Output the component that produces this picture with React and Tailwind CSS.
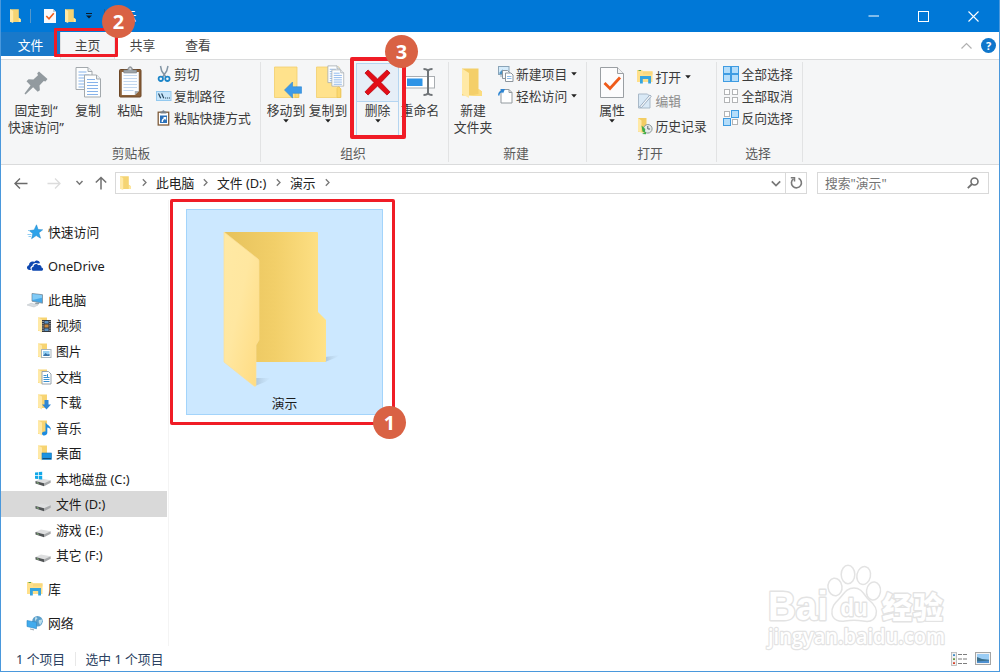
import React from "react";

const Svg = ({ w = 16, h = 16, vb, className = "", children }) => (
  <svg width={w} height={h} viewBox={vb || `0 0 ${w} ${h}`} className={`block shrink-0 overflow-visible ${className}`} fill="none">
    {children}
  </svg>
);

/* ---------- small shared drawings ---------- */

const MiniFolder = ({ w = 11, h = 14 }) => (
  <Svg w={w} h={h} vb="0 0 11 14">
    <path d="M0 .3h8.800v8.400l1.900 1.300v3H0z" fill="#f5d473" />
    <path d="M8.800 9l1.900 1.200V13H8.800z" fill="#ffe9a0" />
    <path d="M0 .3l3.200 1.700V14L0 12.700z" fill="#ffe9a6" />
  </Svg>
);

const SheetLines = ({ x, y, s = 1 }) => (
  <g transform={`translate(${x} ${y}) scale(${s})`}>
    <path d="M.5.5h12l4 4v18H.5z" fill="#fdfefe" stroke="#a3a9ad" />
    <path d="M12.5.5v4h4" fill="#e9eef2" stroke="#a3a9ad" />
    <path d="M3 5h8M3 8h11M3 11h11M3 14h11M3 17h11M3 20h11" stroke="#86b2ea" strokeWidth="1.2" />
  </g>
);

const PinIcon = () => (
  <Svg w={24} h={24}>
    <path d="M15 .500L23.500 8l-2 2.500-1.800-.5-4.200 4.600.4 4.700-2.200 1.500-4.600-4.600L1.500 23.500l-1-1 6-8.100-4-4.200L4.600 8.200l4.800.4 4.600-4.400-.8-1.900z" fill="#929a9f" />
  </Svg>
);

const CopyIcon = () => (
  <Svg w={26} h={32}>
    <SheetLines x={0.5} y={1} />
    <SheetLines x={9} y={8.5} />
  </Svg>
);

const PasteIcon = () => (
  <Svg w={24} h={32}>
    <rect x="1.500" y="3.500" width="21.500" height="27.500" rx="1" fill="#8b6039" stroke="#6c4726" />
    <path d="M3.800 6h17v19l-4 4h-13z" fill="#fcfdff" />
    <path d="M5.500 9.500h13.500M5.500 12.500h13.500M5.500 15.500h13.500M5.500 18.500h13.500M5.500 21.500h13.500M5.500 24.500h10" stroke="#c3d7ef" />
    <path d="M20.800 25h-4v4z" fill="#a9b2ba" />
    <path d="M5.800 7V4h4c0-4.400 4.800-4.400 4.800 0h4v3z" fill="#9da3a8" stroke="#7d8388" strokeWidth=".6" />
    <circle cx="12.200" cy="2.800" r=".9" fill="#e6e8ea" />
  </Svg>
);

const CutIcon = () => (
  <Svg>
    <path d="M4.500 0l1.200 5 4.400 6.500M12 0l-1.300 5-4.400 6.500" stroke="#8295a4" strokeWidth="1.500" />
    <circle cx="4.800" cy="12.800" r="2.200" stroke="#1c86c9" strokeWidth="1.800" />
    <circle cx="11.400" cy="12.800" r="2.200" stroke="#1c86c9" strokeWidth="1.800" />
  </Svg>
);

const PathIcon = () => (
  <Svg>
    <rect x=".5" y="3.500" width="14.500" height="9" fill="#c8e6fb" stroke="#93c9ef" />
    <path d="M2.500 5.500l2.200 4.800M5.600 5.500l2.200 4.800" stroke="#26465f" strokeWidth="1.200" />
    <path d="M9 10h1.200M11 10h1.200M13 10h1" stroke="#26465f" strokeWidth="1.200" />
  </Svg>
);

const PasteShortcutIcon = () => (
  <Svg>
    <rect x="2.200" y="2.200" width="10.500" height="12.800" fill="#fff" stroke="#7e5b39" strokeWidth="1.300" />
    <path d="M4.500 3.600V1.500h1.500Q7.400-.8 8.800 1.500h1.600v2.100z" fill="#7a828a" />
    <rect x="4" y="5.500" width="7" height="7.500" fill="#2c71b9" />
    <path d="M5.600 12c0-2.500 1-3.600 2.500-3.900L7 7h3.200v3.200L9 9.100C7.600 9.500 7 10.400 7 12z" fill="#fff" />
  </Svg>
);

const BigFolderBase = () => (
  <>
    <path d="M.5.500h22.500v20l2 2v8.500H.5z" fill="#ffe28c" stroke="#f2cf6c" strokeWidth=".8" />
    <path d="M21 22l1.500-2 2 2v9H21z" fill="#fbd871" stroke="#eac45a" strokeWidth=".7" />
  </>
);

const MoveToIcon = () => (
  <Svg w={28} h={32}>
    <g transform="translate(2 .5)">
      <BigFolderBase />
      <path d="M10.500 23.500l8-8v4.800h9v6.500h-9v4.800z" fill="#3c9ae8" stroke="#2d87d4" strokeWidth=".6" />
    </g>
  </Svg>
);

const CopyToIcon = () => (
  <Svg w={28} h={32}>
    <g transform="translate(2 .5)">
      <BigFolderBase />
      <SheetLines x={11.500} y={-1} s={0.76} />
      <SheetLines x={15.500} y={3} s={0.74} />
    </g>
  </Svg>
);

const DeleteIcon = () => (
  <Svg w={27} h={27} vb="0 0 28 28">
    <path d="M1 4.200L4.200 1 14 10.300 23.800 1 27 4.200 17.600 14 27 23.800 23.800 27 14 17.600 4.200 27 1 23.800 10.400 14z" fill="#e30d17" stroke="#b3040e" strokeWidth=".8" />
  </Svg>
);

const RenameIcon = () => (
  <Svg w={30} h={30}>
    <rect x="0" y="10.500" width="29.500" height="11.500" fill="#fff" stroke="#a9adb1" />
    <rect x="2" y="12.500" width="15.500" height="7.500" fill="#2e94e6" />
    <path d="M18.500 3c2.200 0 4 .4 4.500 2 .5-1.600 2.300-2 4.500-2M18.500 29c2.200 0 4-.4 4.500-2 .5 1.600 2.300 2 4.500 2M23 4.500v23" stroke="#6e7377" strokeWidth="2" />
  </Svg>
);

const NewFolderIcon = () => (
  <Svg w={22} h={30}>
    <path d="M0 .5h16.500v20.500l3.500 2.500v4H0z" fill="#f4cf69" />
    <path d="M16.500 21l3.500 2.500v4.500H6l10.500-2z" fill="#fbdc80" />
    <path d="M0 .5l7 4.500V30L0 26z" fill="#ffe9a6" />
  </Svg>
);

const NewItemIcon = () => (
  <Svg>
    <rect x=".5" y=".5" width="10.500" height="8" fill="#d6ecfb" stroke="#8aa4b8" />
    <path d="M1.500 6.500l3-3 3 3 1.500-1 1.500 2.500h-9z" fill="#4b93c6" />
    <path d="M3 9v2M5 9v2" stroke="#8aa4b8" />
    <path d="M4.500 4.500h5l2 2v6h-7z" fill="#f8fafc" stroke="#8c959d" />
    <path d="M7.500 7h5.500l2 2v6.500H7.500z" fill="#fff" stroke="#8c959d" />
    <path d="M9 10.500h4.500M9 12.500h4.500" stroke="#8cbbe8" />
  </Svg>
);

const EasyAccessIcon = () => (
  <Svg>
    <path d="M3 1.500h8l3 3v10.500H3z" fill="#fff" stroke="#939a9f" />
    <path d="M11 1.500v3h3" stroke="#939a9f" />
    <path d="M0 7.500c.2-3 1.200-4.300 3-4.700L2.500 1h4.500L5 5.500l-.8-1.200C2.500 4.700 1.500 5.700 1.500 7.500z" fill="#2d85d2" />
  </Svg>
);

const PropertiesIcon = () => (
  <Svg w={24} h={32}>
    <path d="M.5 1.500h17l6 6V31.500H.5z" fill="#fcfcfd" stroke="#9a9fa3" />
    <path d="M17.500 1.500v6h6" fill="#f1f2f3" stroke="#9a9fa3" />
    <path d="M4.500 17l5.500 5.500L20 11.500" stroke="#ef5b1b" strokeWidth="2.800" />
  </Svg>
);

const LibraryIcon = () => (
  <Svg>
    <path d="M0 1h5l1 1.200h9.500V13H0z" fill="#ffe08a" />
    <path d="M1.500 1.500h2.500" stroke="#61a84a" />
    <path d="M6 2.500h9.500v3H6z" fill="#f9d87e" />
    <path d="M3 14.500V7h11v7.500h-2.800v-4.500H5.800v4.500z" fill="#36a5df" />
  </Svg>
);

const EditIcon = () => (
  <Svg>
    <path d="M1.500 1h9l2.500 2.500V15H1.500z" fill="#d9e9f6" stroke="#a9b9c8" />
    <path d="M2.500 14L12.800 2l1.500 1.200L4.500 14.500z" fill="#f5f8fb" stroke="#8ba0b5" strokeWidth=".8" />
  </Svg>
);

const HistoryIcon = () => (
  <Svg>
    <path d="M1 0h8.500v10L8 15 1 13.500z" fill="#f3cd63" />
    <path d="M1 0l3.500 2.500V15L1 13z" fill="#ffe9a6" />
    <circle cx="10.800" cy="10.800" r="4.300" fill="#e7eceb" stroke="#8b9696" />
    <path d="M10.800 8v3h2.300" stroke="#59656b" />
    <path d="M4.500 7.500l3.800 3.500-.5 3.800L5.500 13.500z" fill="#3fae49" />
    <path d="M5 16l4-2.300v2.600z" fill="#3fae49" />
  </Svg>
);

const SelectIcon = ({ mode }) => {
  const cells = [[0.5, 0.5], [8.5, 0.5], [0.5, 8.5], [8.5, 8.5]];
  const isOn = (i) => mode === "all" || (mode === "invert" && (i === 1 || i === 2));
  return (
    <Svg>
      {cells.map(([x, y], i) =>
        isOn(i) ? (
          <rect key={i} x={x} y={y} width="7" height="7" fill="#b4ddfa" stroke="#3f9ce2" />
        ) : (
          <rect key={i} x={x + 1} y={y + 1} width="5" height="5" fill="#fff" stroke="#b2b4b6" />
        )
      )}
    </Svg>
  );
};

/* ---------- sidebar drawings ---------- */

const StarIcon = () => (
  <Svg>
    <path d="M9.500.8l1.600 4.700 4.600.3-3.800 3 1.700 5.400-4.400-2.600-4.600 3.100 1.200-5.100-3.600-3 4.900-.6z" fill="#2ea3ea" stroke="#1f86c8" strokeWidth=".5" />
    <path d="M.5 10.500h4M1.500 12.500h2.500M1 6.500h2" stroke="#8fcdf3" />
  </Svg>
);

const OneDriveIcon = () => (
  <Svg>
    <path d="M2.800 12C-.8 12-.8 7.500 2 7.200 2 4.200 5 2.800 7.200 4c1.500-2.500 5.300-2 5.800 1.300l-2.200.2C8 4.200 5.700 5.500 5.400 7.700 3.200 8.200 3 10.500 4 12z" fill="#0d47b0" />
    <path d="M6.800 12.800c-2.800 0-2.800-3.800-.3-4.100C6.500 5.800 10 5.200 11.200 7.300c2-.7 3.500.6 3.300 2.200 2.300.3 2 3.300 0 3.300z" fill="#0d47b0" />
  </Svg>
);

const PcIcon = () => (
  <Svg>
    <path d="M5 1.500l10.500 1.200v8.500L5 9.200z" fill="#46a8e8" stroke="#7c8d99" strokeWidth=".8" />
    <path d="M5.500 2l9.500 1.200v2.500L5.500 8z" fill="#82cbf6" />
    <path d="M9 10.500l3.500.6-1 1.500-4-.6z" fill="#93a0a8" />
    <path d="M0 13l4-1.800 7 1.800-4 2z" fill="#d9dee2" stroke="#b8bfc5" strokeWidth=".5" />
  </Svg>
);

const FolderWith = ({ children }) => (
  <Svg>
    <path d="M3 .500h9v13.500H3z" fill="#f7d472" />
    <path d="M3 .500l4 2v13L3 13.200z" fill="#ffe9a6" />
    {children}
  </Svg>
);

const VideoIcon = () => (
  <FolderWith>
    <rect x="7" y="3" width="9" height="12" fill="#34383e" />
    <path d="M8 4v10.500M15 4v10.500" stroke="#e9ecef" strokeDasharray="1 1.200" />
    <path d="M9.500 4h4v2.500h-4zM9.500 11.500h4V14h-4z" fill="#5a91c2" />
    <path d="M9.500 7.500h4v3h-4z" fill="#c88a3f" />
  </FolderWith>
);
const PictureIcon = () => (
  <FolderWith>
    <rect x="6.500" y="6.500" width="9.500" height="8" fill="#fff" stroke="#a9b5bd" />
    <rect x="8" y="8" width="6.500" height="5" fill="#98d0f2" />
    <path d="M8 13l2.500-3 2 1.500 2-.5v2z" fill="#3974a8" />
  </FolderWith>
);
const DocIcon = () => (
  <FolderWith>
    <path d="M7 2.500h6.500l2.500 2.500v10H7z" fill="#fff" stroke="#97a4ae" />
    <path d="M8.500 6.500h3M8.500 8.500h6M8.500 10.500h6M8.500 12.500h6M12.500 5v4" stroke="#3c91cf" />
  </FolderWith>
);
const DownloadIcon = () => (
  <FolderWith>
    <path d="M9.500 6h4v4.500H16L11.500 15.500 7 10.500h2.500z" fill="#2f86d3" />
  </FolderWith>
);
const MusicIcon = () => (
  <FolderWith>
    <path d="M10.500 1.500c0 3.500 6 3.500 5.300 9-.5-2-1.800-3-3.500-3V13c-.2 3-5.300 3.300-5.300.7 0-2 2-2.500 3.500-2.100z" fill="#1d8bde" />
  </FolderWith>
);
const DesktopIcon = () => (
  <FolderWith>
    <rect x="7" y="8" width="9.500" height="6.500" fill="#1b93e2" stroke="#1675b6" strokeWidth=".6" />
    <path d="M7.500 13.500h8.500" stroke="#124f7b" />
  </FolderWith>
);

const DriveIcon = ({ windows }) => (
  <Svg>
    <path d="M.5 10L6 7.500l9.700 1.700L9 12.200z" fill="#dedfe0" />
    <path d="M.5 10L9 12.200v3L.5 12.500z" fill="#515456" />
    <path d="M9 12.200l6.700-3v2.500L9 15.200z" fill="#a7a9ab" />
    <path d="M1.800 11.700l2 .6" stroke="#9adf8b" strokeWidth=".8" />
    {windows && <path d="M0 1.500l3-.3v3H0zM3.700 1.100L7.200.8v3.400H3.700zM0 5h3v3l-3-.3zM3.700 5h3.500v3.500l-3.500-.3z" fill="#12a8e8" />}
  </Svg>
);

const NetworkIcon = () => (
  <Svg>
    <circle cx="10.500" cy="6.300" r="5.300" fill="#5b9fcb" />
    <path d="M8 2.500c2-1 3 .5 2 1.500S8.500 5 8 7zM12 5l3-.5c.5 2-.5 4-2 5.500-.5-2-2-2.500-1-5z" fill="#b9ddec" />
    <path d="M0 5.500l9.500 1.700v6.500L0 11.500z" fill="#41abed" stroke="#2b86c4" strokeWidth=".6" />
    <path d="M3 13.500l4 .7v1.300l-4-1z" fill="#a4afb6" />
  </Svg>
);

/* ---------- ribbon pieces ---------- */

const Arrow = () => (
  <Svg w={6} h={4}>
    <path d="M.2.200h5.600L3 3.400z" fill="#222" />
  </Svg>
);

const Big = ({ icon, lines, arrow, className }) => (
  <div className={`flex shrink-0 flex-col items-center pt-[6px] ${className}`}>
    <div className="flex h-[36px] items-start justify-center">{icon}</div>
    {lines.map((l) => (
      <div key={l} className="h-[17px] leading-[17px] whitespace-nowrap">{l}</div>
    ))}
    {arrow && <Arrow />}
  </div>
);

const Small = ({ icon, label, arrow, muted, tall }) => (
  <div className={`flex items-center ${tall ? "h-[24.500px]" : "h-[22px]"}`}>
    {icon}
    <span className={`ml-[2.500px] whitespace-nowrap ${muted ? "text-[#8d8d8d]" : ""}`}>{label}</span>
    {arrow && <span className="ml-[4px]"><Arrow /></span>}
  </div>
);

const Group = ({ label, className, labelClass = "", children }) => (
  <section className={`relative flex shrink-0 flex-col ${className}`}>
    <div className="flex h-[84px]">{children}</div>
    <div className={`text-center leading-[19px] text-[#5a5a5a] ${labelClass}`}>{label}</div>
    <div className="absolute top-[2px] right-0 h-[100px] w-px bg-[#e2e3e4]" />
  </section>
);

const Chevron = () => (
  <Svg w={5} h={8}>
    <path d="M.8.300L4 3.500.8 6.700" stroke="#777" strokeWidth="1.300" />
  </Svg>
);

const Badge = ({ n, className }) => (
  <div className={`absolute flex size-[33px] items-center justify-center rounded-full bg-[#d96244] font-['Open_Sans',sans-serif] text-[20px] leading-none font-bold text-white ${className}`}>
    {n}
  </div>
);

const sidebarItems = [
  { label: "快速访问", icon: <StarIcon /> },
  { label: "OneDrive", icon: <OneDriveIcon />, gap: true },
  { label: "此电脑", icon: <PcIcon />, gap: true },
  { label: "视频", icon: <VideoIcon />, child: true },
  { label: "图片", icon: <PictureIcon />, child: true },
  { label: "文档", icon: <DocIcon />, child: true },
  { label: "下载", icon: <DownloadIcon />, child: true },
  { label: "音乐", icon: <MusicIcon />, child: true },
  { label: "桌面", icon: <DesktopIcon />, child: true },
  { label: "本地磁盘 (C:)", icon: <DriveIcon windows />, child: true },
  { label: "文件 (D:)", icon: <DriveIcon />, child: true, selected: true },
  { label: "游戏 (E:)", icon: <DriveIcon />, child: true },
  { label: "其它 (F:)", icon: <DriveIcon />, child: true },
  { label: "库", icon: <LibraryIcon />, gap: true },
  { label: "网络", icon: <NetworkIcon />, gap: true },
];

const TitleBar = () => (
  <header className="flex h-[32px] shrink-0 items-center bg-[#0078d7] text-white">
    <div className="flex flex-1 items-center pl-[9px]">
      <MiniFolder />
      <div className="ml-[9px] h-[14px] w-px bg-[#5397cb]" />
      <Svg w={12} h={14} className="ml-[13px]">
        <path d="M0 0h9l3 3v11H0z" fill="#f8f9fb" />
        <path d="M9 0v3h3z" fill="#c4ccd3" />
        <path d="M2.300 7l2.700 2.800L9.800 4.300" stroke="#ef5b1b" strokeWidth="1.600" />
      </Svg>
      <div className="ml-[9px]"><MiniFolder /></div>
      <Svg w={6} h={6} className="ml-[10px]">
        <path d="M0 .5h6" stroke="#0b1c2b" />
        <path d="M0 2.500h6l-3 3z" fill="#0b1c2b" />
      </Svg>
      <div className="ml-[12px] h-[14px] w-px bg-[#2a5f91]" />
      <span className="ml-[6px]">演示</span>
    </div>
    <div className="flex items-center pr-[20px]">
      <Svg w={11} h={11}><path d="M.500 5h10.500" stroke="#fff" /></Svg>
      <Svg w={11} h={11} className="ml-[39px]"><rect x=".5" y=".5" width="10" height="10" stroke="#fff" /></Svg>
      <Svg w={11} h={11} className="ml-[39px]"><path d="M.5.500l10 10M10.500.500l-10 10" stroke="#fff" strokeWidth="1.100" /></Svg>
    </div>
  </header>
);

const TabRow = () => (
  <nav className="flex h-[27px] shrink-0 text-[#444]">
    <div className="h-[24px] w-[59px] bg-[#1979ca] text-center leading-[26px] text-white">文件</div>
    <div className="h-[28px] w-[55px] border-x border-[#e0e1e2] bg-[#f5f6f7] text-center leading-[26px]">主页</div>
    <div className="w-[55px] text-center leading-[26px]">共享</div>
    <div className="w-[55px] pl-px text-center leading-[26px]">查看</div>
    <div className="flex flex-1 items-center justify-end pr-[3px]">
      <Svg w={11} h={6}><path d="M.5 5.500l5-5 5 5" stroke="#b1b1b1" strokeWidth="1.200" /></Svg>
      <div className="ml-[9px] flex size-[15px] items-center justify-center rounded-full bg-[#0f76cb] text-[11px] leading-none font-bold text-white">?</div>
    </div>
  </nav>
);

const Ribbon = () => (
  <div className="flex h-[106px] shrink-0 border-y border-[#dadbdc] bg-[#f5f6f7] text-[#3b3b3b]">
    <Group label="剪贴板" className="w-[260px]">
      <Big className="w-[70px]" icon={<div className="pt-[5px]"><PinIcon /></div>} lines={["固定到“", "快速访问”"]} />
      <Big className="w-[34px]" icon={<CopyIcon />} lines={["复制"]} />
      <Big className="w-[50px]" icon={<PasteIcon />} lines={["粘贴"]} />
      <div className="flex flex-col pt-[3px] pl-[.500px]">
        <Small icon={<CutIcon />} label="剪切" />
        <Small icon={<PathIcon />} label="复制路径" />
        <Small icon={<PasteShortcutIcon />} label="粘贴快捷方式" />
      </div>
    </Group>
    <Group label="组织" className="w-[188px]" labelClass="pr-[4px]">
      <Big className="w-[50px]" icon={<MoveToIcon />} lines={["移动到"]} arrow />
      <Big className="w-[34px]" icon={<CopyToIcon />} lines={["复制到"]} arrow />
      <div className="relative mt-[3px] ml-[11px] flex h-[74px] w-[43px] flex-col border border-[#b5d5f0] bg-[#f5f6f7]">
        <div className="flex h-[38px] items-center justify-center border-b border-[#b5d5f0] bg-[#e6eef7]"><DeleteIcon /></div>
        <div className="flex flex-col items-center">
          <div className="h-[17px] leading-[17px]">删除</div>
          <Arrow />
        </div>
      </div>
      <Big className="w-[42px]" icon={<RenameIcon />} lines={["重命名"]} />
    </Group>
    <Group label="新建" className="w-[138px]" labelClass="pr-[4px]">
      <Big className="w-[48px]" icon={<div className="pt-[2px]"><NewFolderIcon /></div>} lines={["新建", "文件夹"]} />
      <div className="flex flex-col pt-[3px] pl-[.500px]">
        <Small icon={<NewItemIcon />} label="新建项目" arrow />
        <Small icon={<EasyAccessIcon />} label="轻松访问" arrow />
      </div>
    </Group>
    <Group label="打开" className="w-[130px]" labelClass="pr-[4px]">
      <Big className="w-[50px]" icon={<PropertiesIcon />} lines={["属性"]} arrow />
      <div className="flex flex-col pt-[4.500px]">
        <Small tall icon={<LibraryIcon />} label="打开" arrow />
        <Small tall icon={<EditIcon />} label="编辑" muted />
        <Small tall icon={<HistoryIcon />} label="历史记录" />
      </div>
    </Group>
    <Group label="选择" className="w-[86px]" labelClass="pr-[4px]">
      <div className="flex flex-col pt-[3px] pl-[6px]">
        <Small icon={<SelectIcon mode="all" />} label="全部选择" />
        <Small icon={<SelectIcon mode="none" />} label="全部取消" />
        <Small icon={<SelectIcon mode="invert" />} label="反向选择" />
      </div>
    </Group>
  </div>
);

const AddressRow = () => (
  <div className="flex h-[35px] shrink-0 items-center pr-[10px] pl-[13px]">
    <Svg w={14} h={12}><path d="M13.500 6.500H1M6 1.500L1 6.500l5 5" stroke="#6a6a6a" strokeWidth="1.400" /></Svg>
    <Svg w={14} h={12} className="ml-[19px]"><path d="M.5 6.500H13M8 1.500l5 5-5 5" stroke="#dcdcdc" strokeWidth="1.300" /></Svg>
    <Svg w={7} h={5} className="ml-[15px]"><path d="M.5 1l3 3.200 3-3.200" stroke="#777" strokeWidth="1.500" /></Svg>
    <Svg w={12} h={13} className="ml-[12px]"><path d="M6 13.500V1.500M.8 6.500L6 1.500l5.200 5" stroke="#707070" strokeWidth="1.500" /></Svg>
    <div className="ml-[8px] flex h-[22px] w-[692px] items-center border border-[#d9d9d9] pl-[4px] text-[#222]">
      <MiniFolder w={11} h={14} />
      <span className="ml-[11px]"><Chevron /></span>
      <span className="ml-[9px] w-[39px] whitespace-nowrap">此电脑</span>
      <span className="ml-[8px]"><Chevron /></span>
      <span className="ml-[9px] w-[51px] whitespace-nowrap">文件 (D:)</span>
      <span className="ml-[8px]"><Chevron /></span>
      <span className="ml-[9px] w-[26px] whitespace-nowrap">演示</span>
      <span className="ml-[9px]"><Chevron /></span>
      <Svg w={10} h={6} className="ml-auto"><path d="M.8 1.300L5 5.500l4.200-4.200" stroke="#777" strokeWidth="1.700" /></Svg>
      <div className="ml-[4px] flex h-full w-[21px] items-center justify-center border-l border-[#d9d9d9]">
        <Svg w={13} h={13}>
          <path d="M8.500 2.300A5 5 0 1 1 3.500 2.800" stroke="#7a7a7a" strokeWidth="1.600" />
          <path d="M.8 1.700h3.700V5.500" stroke="#7a7a7a" strokeWidth="1.500" />
        </Svg>
      </div>
    </div>
    <div className="ml-[10px] flex h-[22px] w-[172px] items-center justify-between border border-[#d9d9d9] pr-[9px] pl-[7px] text-[#757575]">
      <span>搜索"演示"</span>
      <Svg w={12} h={12}>
        <circle cx="7.500" cy="4.500" r="3.500" stroke="#707070" strokeWidth="1.600" />
        <path d="M5 7L.8 11.200" stroke="#707070" strokeWidth="1.800" />
      </Svg>
    </div>
  </div>
);

const Sidebar = () => (
  <aside className="w-[168px] shrink-0 border-r border-[#f4f4f4] pt-[19px] text-[#1c1c1c]">
    {sidebarItems.map((it) => (
      <div
        key={it.label}
        className={`flex h-[25.550px] w-[166px] items-center ${it.gap ? "mt-[8.500px]" : ""} ${it.child ? "pl-[34px]" : "pl-[26px]"} ${it.selected ? "bg-[#d9d9d9]" : ""}`}
      >
        {it.icon}
        <span className="ml-[5px] whitespace-nowrap">{it.label}</span>
      </div>
    ))}
  </aside>
);

const LargeFolder = () => (
  <Svg w={120} h={158}>
    <defs>
      <linearGradient id="back" x1="0" y1="0" x2="1" y2="0">
        <stop offset="0" stopColor="#e6c25c" />
        <stop offset=".5" stopColor="#f2cf69" />
        <stop offset="1" stopColor="#ffe288" />
      </linearGradient>
      <linearGradient id="front" x1="0" y1="0" x2="1" y2="1">
        <stop offset="0" stopColor="#ffe9a4" />
        <stop offset=".45" stopColor="#ffe7a0" />
        <stop offset="1" stopColor="#ffdb80" />
      </linearGradient>
      <linearGradient id="shade" x1="0" y1="0" x2="1" y2="0">
        <stop offset="0" stopColor="#9fb6ca" stopOpacity=".7" />
        <stop offset="1" stopColor="#b4cde2" stopOpacity="0" />
      </linearGradient>
    </defs>
    <path d="M102 126l15-2-5 3-10 4z" fill="url(#shade)" />
    <path d="M32 147l16 0-6 4-10 4z" fill="url(#shade)" />
    <path d="M1 1h93q1 0 1 1v79l8 8v41q0 1-1 1H32V60z" fill="url(#back)" />
    <path d="M1 1l34 27q1 1 1 2v79l-3 5v40q0 2-2 1L1 131z" fill="url(#front)" stroke="#fbe09a" strokeWidth=".7" />
  </Svg>
);

const StatusBar = () => (
  <footer className="flex h-[25px] shrink-0 items-center pr-[8px] pl-[15px] text-[#2b4161]">
    <span className="w-[49px] whitespace-nowrap">1 个项目</span>
    <div className="ml-[10px] h-[14px] w-px bg-[#e8e8e8]" />
    <span className="ml-[9.500px]">选中 1 个项目</span>
    <Svg w={16} h={14} className="ml-auto">
      <rect x=".5" y=".5" width="5" height="13" fill="#f0f0f0" stroke="#b4b4b4" strokeWidth=".8" />
      <path d="M2 3.200h2" stroke="#3e8ec9" strokeWidth="1.800" />
      <path d="M2 7.200h2" stroke="#6b9a4a" strokeWidth="1.800" />
      <path d="M2 11.200h2" stroke="#d8442b" strokeWidth="1.800" />
      <path d="M7 2.500h9M7 7h9M7 11.500h9" stroke="#7d7d7d" strokeDasharray="4 1" />
    </Svg>
    <Svg w={16} h={13} className="ml-[8px]">
      <rect x=".5" y=".5" width="15" height="12" fill="#f3f3f3" stroke="#a5a5a5" />
      <rect x="2" y="2" width="12" height="9" fill="#9bcdf5" />
      <path d="M2 5l5 2 7 .8V11H2z" fill="#3b6f8b" />
      <path d="M2 9.500l12-1V11H2z" fill="#4f90d0" />
    </Svg>
  </footer>
);

const Watermark = () => (
  <Svg w={182} h={88} className="absolute top-[563px] left-[765px]">
    <g fill="#fff" stroke="#e3e3e3" strokeWidth="1.500">
      <ellipse cx="69" cy="24" rx="7" ry="8.800" transform="rotate(-8 69 24)" />
      <ellipse cx="82" cy="11.500" rx="6.800" ry="9.200" />
      <ellipse cx="97.700" cy="12.500" rx="6.800" ry="9" transform="rotate(12 97.700 12.500)" />
      <ellipse cx="107.500" cy="28" rx="7" ry="9" transform="rotate(8 107.500 28)" />
      <path d="M88 25c8 0 10 7 15 12 5 4 9 9 7 15-2 7-8 7-13 6-6-1-12-1-18 0-6 1-12-1-13-7-1-7 3-11 7-15 5-5 7-11 15-11z" />
    </g>
    <g fill="#fff" stroke="#e3e3e3" strokeWidth="2.800" strokeLinejoin="round" className="[paint-order:stroke]">
      <text x="2" y="57" fontFamily="Liberation Sans, sans-serif" fontWeight="700" fontSize="40" textLength="60" lengthAdjust="spacingAndGlyphs">Bai</text>
      <text x="74.500" y="52.500" fontFamily="Liberation Sans, sans-serif" fontWeight="700" fontSize="24" textLength="27" lengthAdjust="spacingAndGlyphs">du</text>
      <text x="116" y="55" fontFamily="Noto Sans CJK SC, sans-serif" fontWeight="900" fontSize="30" textLength="61">经验</text>
      <text x="2" y="81" fontFamily="Open Sans, sans-serif" fontWeight="600" fontSize="21" strokeWidth="2.400" textLength="177" lengthAdjust="spacingAndGlyphs">jingyan.baidu.com</text>
    </g>
  </Svg>
);

export default function App() {
  return (
    <div className="relative flex h-[672px] w-[1000px] flex-col overflow-hidden border-x border-b border-[#4a98dc] bg-white font-['Noto_Sans','Noto_Sans_CJK_SC',sans-serif] text-[12.800px] leading-[18px]">
      <TitleBar />
      <TabRow />
      <Ribbon />
      <AddressRow />
      <div className="flex min-h-0 flex-1">
        <Sidebar />
        <main className="flex-1 pt-[9px] pl-[17px]">
          <div className="relative flex h-[206px] w-[197px] flex-col items-center border border-[#a3d4fb] bg-[#cce8ff] pt-[21px]">
            <div className="-ml-[3px]"><LargeFolder /></div>
            <div className="mt-[5px] text-[#1c1c1c]">演示</div>
            <div className="absolute -top-[11px] -left-[17px] h-[226px] w-[225px] rounded-[2px] border-[3.500px] border-[#f01c26]" />
          </div>
        </main>
      </div>
      <StatusBar />
      <Watermark />
      <div className="absolute top-[28px] left-[53px] h-[29px] w-[64px] rounded-[1px] border-[3.500px] border-[#f01c26]" />
      <div className="absolute top-[57px] left-[349px] h-[82px] w-[56px] rounded-[2px] border-4 border-[#f01c26]" />
      <Badge n="2" className="top-[5px] left-[101px]" />
      <Badge n="3" className="top-[35px] left-[384px]" />
      <Badge n="1" className="top-[406px] left-[372px]" />
    </div>
  );
}
